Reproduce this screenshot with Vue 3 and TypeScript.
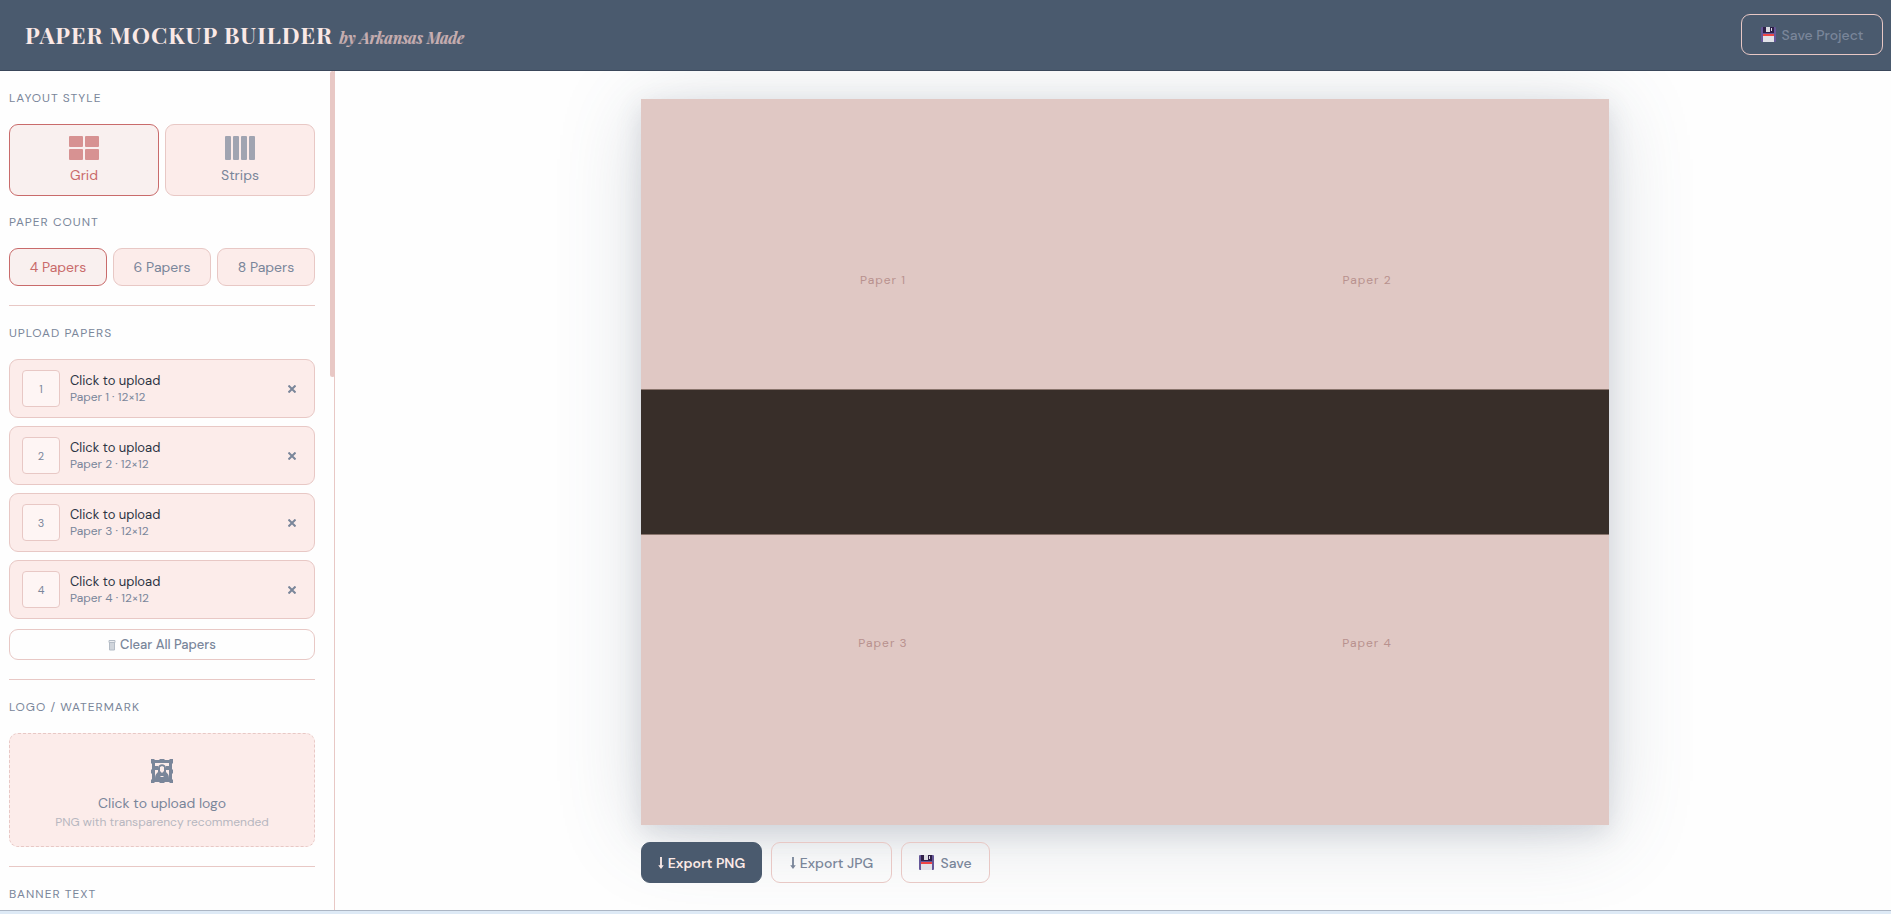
<script setup lang="ts">
import { ref } from 'vue'

const layout = ref<'grid' | 'strips'>('grid')
const count = ref(4)
const counts = [4, 6, 8]
const papers = [1, 2, 3, 4]
</script>

<template>
  <div class="app">
    <header class="topbar">
      <h1 class="brand">PAPER MOCKUP BUILDER <span class="byline">by Arkansas Made</span></h1>
      <button class="btn save-project" type="button">
        <svg class="disk" viewBox="0 0 15 15" aria-hidden="true">
          <rect width="15" height="15" rx="1" fill="#665899" />
          <rect x="2" width="11" height="6" fill="#2f1f48" />
          <rect x="5" width="4" height="5" fill="#dcdce2" />
          <rect x="10" y="1" width="1" height="3" fill="#dcdce2" />
          <rect x="2" y="7" width="11" height="2" fill="#ef4545" />
          <rect x="2" y="9" width="11" height="6" fill="#e2e2e8" />
        </svg>
        <span>Save Project</span>
      </button>
    </header>

    <div class="body">
      <aside class="sidebar">
        <div class="scroll">
          <section class="section">
            <h2 class="label">LAYOUT STYLE</h2>
            <div class="row">
              <button class="choice tall" :class="{ active: layout === 'grid' }" type="button" @click="layout = 'grid'">
                <span class="glyph quads"><i v-for="n in 4" :key="n"></i></span>
                Grid
              </button>
              <button class="choice tall" :class="{ active: layout === 'strips' }" type="button" @click="layout = 'strips'">
                <span class="glyph bars"><i v-for="n in 4" :key="n"></i></span>
                Strips
              </button>
            </div>
          </section>

          <section class="section">
            <h2 class="label">PAPER COUNT</h2>
            <div class="row">
              <button v-for="n in counts" :key="n" class="choice short" :class="{ active: count === n }" type="button" @click="count = n">{{ n }} Papers</button>
            </div>
          </section>

          <hr class="rule" />

          <section class="section">
            <h2 class="label">UPLOAD PAPERS</h2>
            <ul class="slots">
              <li v-for="n in papers" :key="n" class="slot">
                <button class="pick" type="button">
                  <span class="thumb">{{ n }}</span>
                  <span class="info">
                    <span class="name">Click to upload</span>
                    <span class="meta">Paper {{ n }} · 12×12</span>
                  </span>
                </button>
                <button class="remove" type="button" :aria-label="'Remove paper ' + n">
                  <svg viewBox="0 0 8 8" aria-hidden="true"><path d="M.5.5 7.500 7.500M7.500.5.5 7.500" /></svg>
                </button>
              </li>
            </ul>
            <button class="btn clear" type="button">
              <svg class="trash" viewBox="0 0 8 12" aria-hidden="true">
                <path d="M1 1.500h6v2H1zM1.500 3.500v7.500h5V3.500M3 4v7M5 4v7" />
              </svg>
              <span>Clear All Papers</span>
            </button>
          </section>

          <hr class="rule" />

          <section class="section">
            <h2 class="label">LOGO / WATERMARK</h2>
            <button class="drop" type="button">
              <svg class="picture" viewBox="0 0 22 24" aria-hidden="true">
                <path fill-rule="evenodd" d="M0 0h3l1 1h4l1-1h4l1 1h4l1-1h3v4l-1 1v5l1 1v3l-1 1v5l1 1v3h-3l-1-1h-4l-1 1H9l-1-1H4l-1 1H0v-3l1-1v-5l-1-1v-3l1-1V5L0 4zM4 4v16h14V4z" />
                <path d="M4 7h3v4H4zM15 7h3v4h-3z" />
                <path fill-rule="evenodd" d="M4 20c0-4 1-5 3-7V9c0-5 8-5 8 0v4c2 2 3 3 3 7zM9 8v4l2 2 2-2V8l-2-1zM9 18h4l-1-1h-2z" />
              </svg>
              <span class="drop-title">Click to upload logo</span>
              <span class="drop-hint">PNG with transparency recommended</span>
            </button>
          </section>

          <hr class="rule" />

          <section class="section">
            <h2 class="label">BANNER TEXT</h2>
          </section>
        </div>
        <div class="track"><div class="handle"></div></div>
      </aside>

      <main class="stage">
        <div class="preview">
          <div class="canvas">
            <div v-for="n in papers" :key="n" class="paper">Paper {{ n }}</div>
            <div class="banner"></div>
          </div>
          <div class="actions">
            <button class="btn primary" type="button">
              <svg class="arrow" viewBox="0 0 6 13" aria-hidden="true"><path d="M2 0h2v9h2l-3 4-3-4h2z" /></svg>
              <span>Export PNG</span>
            </button>
            <button class="btn" type="button">
              <svg class="arrow" viewBox="0 0 6 13" aria-hidden="true"><path d="M2 0h2v9h2l-3 4-3-4h2z" /></svg>
              <span>Export JPG</span>
            </button>
            <button class="btn save" type="button">
              <svg class="disk" viewBox="0 0 15 15" aria-hidden="true">
                <rect width="15" height="15" rx="1" fill="#665899" />
                <rect x="2" width="11" height="6" fill="#2f1f48" />
                <rect x="5" width="4" height="5" fill="#dcdce2" />
                <rect x="10" y="1" width="1" height="3" fill="#dcdce2" />
                <rect x="2" y="7" width="11" height="2" fill="#ef4545" />
                <rect x="2" y="9" width="11" height="6" fill="#e2e2e8" />
              </svg>
              <span>Save</span>
            </button>
          </div>
        </div>
      </main>
    </div>
    <footer class="edge"></footer>
  </div>
</template>

<style>
body {
  margin: 0;
}
</style>

<style scoped>
.app {
  display: flex;
  flex-direction: column;
  height: 100vh;
  overflow: hidden;
  background: #fefefe;
  color: #7a869a;
  font-family: "DM Sans", Inter, "Open Sans", sans-serif;
  font-size: 14px;
}
.app *,
.app {
  box-sizing: border-box;
}
button {
  font: inherit;
  color: inherit;
  cursor: pointer;
}
.topbar {
  display: flex;
  align-items: center;
  justify-content: space-between;
  flex: none;
  height: 71px;
  padding: 0 8px 1px 25px;
  background: #4a5a6e;
  border-bottom: 1px solid #3a475a;
}
.brand {
  margin: 0;
  padding-top: 4px;
  color: #fbe9e6;
  font-family: "Playfair Display", "Liberation Serif", serif;
  font-size: 23px;
  line-height: 32px;
  font-weight: 700;
  letter-spacing: 1px;
}
.byline {
  color: #c9b0b2;
  font-size: 16px;
  font-style: italic;
  font-weight: 400;
  letter-spacing: 0;
  text-shadow: 1px 0 0 currentColor;
}
.btn {
  display: flex;
  align-items: center;
  justify-content: center;
  gap: 4px;
  height: 41px;
  padding: 0;
  border: 1px solid #e8c8c5;
  border-radius: 9px;
  background: transparent;
  font-weight: 500;
  line-height: 20px;
  white-space: nowrap;
}
.disk {
  width: 15px;
  height: 15px;
  margin-right: 2px;
}
.save-project {
  width: 142px;
  color: #7a869a;
}
.body {
  display: flex;
  flex: 1;
  min-height: 0;
}
.sidebar {
  position: relative;
  flex: none;
  width: 335px;
  border-right: 1px solid #e8c8c5;
}
.scroll {
  height: 100%;
  padding: 19px 19px 0 9px;
  overflow: hidden;
}
.track {
  position: absolute;
  top: 0;
  right: -1px;
  bottom: 0;
  width: 5px;
}
.handle {
  height: 306px;
  border-radius: 3px;
  background: #e8c8c5;
}
.label {
  margin: 0 0 18px;
  font-size: 12px;
  line-height: 16px;
  font-weight: 400;
  letter-spacing: 1px;
}
.section + .section {
  margin-top: 18px;
}
.row {
  display: flex;
  gap: 6px;
}
.choice {
  display: flex;
  flex: 1;
  flex-direction: column;
  align-items: center;
  border: 1px solid #e8c8c5;
  border-radius: 9px;
  background: #fcecea;
  line-height: 20px;
}
.choice.active {
  border-color: #c96b6b;
  background: #f9f0ef;
  color: #c96b6b;
}
.tall {
  height: 72px;
  padding: 11px 0 0;
  gap: 5px;
}
.short {
  height: 38px;
  padding: 0;
  justify-content: center;
}
.glyph {
  display: grid;
  gap: 2px;
  width: 30px;
  height: 24px;
  opacity: 0.7;
}
.quads {
  grid-template-columns: 1fr 1fr;
}
.bars {
  grid-template-columns: repeat(4, 1fr);
}
.glyph i {
  border-radius: 1px;
  background: currentColor;
}
.rule {
  height: 1px;
  margin: 19px 0;
  border: 0;
  background: #e8c8c5;
}
.slots {
  display: flex;
  flex-direction: column;
  gap: 8px;
  margin: 0;
  padding: 0;
  list-style: none;
}
.slot {
  display: flex;
  align-items: center;
  height: 59px;
  padding: 0 12px;
  border: 1px solid #e8c8c5;
  border-radius: 9px;
  background: #fcecea;
}
.pick {
  display: flex;
  flex: 1;
  align-items: center;
  gap: 10px;
  padding: 0;
  border: 0;
  background: none;
  text-align: left;
}
.thumb {
  display: grid;
  place-items: center;
  width: 38px;
  height: 37px;
  border: 1px solid #e8c8c5;
  border-radius: 4px;
  background: #fef5f4;
  font-size: 11px;
}
.info {
  display: flex;
  flex-direction: column;
}
.name {
  color: #2c3444;
  font-size: 13px;
  line-height: 17px;
}
.meta {
  font-size: 12px;
  line-height: 16px;
}
.remove {
  display: grid;
  place-items: center;
  width: 20px;
  height: 20px;
  padding: 0;
  border: 0;
  background: none;
}
.remove svg {
  width: 8px;
  height: 8px;
  fill: none;
  stroke: currentColor;
  stroke-width: 2;
}
.clear {
  width: 100%;
  height: 31px;
  margin-top: 10px;
  font-size: 13px;
}
.trash {
  width: 8px;
  height: 12px;
  fill: #eceef1;
  stroke: #b4bcc6;
}
.drop {
  display: flex;
  flex-direction: column;
  align-items: center;
  width: 100%;
  height: 114px;
  padding: 25px 0 0;
  border: 1px dashed #e8c8c5;
  border-radius: 9px;
  background: #fcecea;
}
.picture {
  width: 22px;
  height: 24px;
  margin-bottom: 10px;
  fill: currentColor;
}
.drop-title {
  line-height: 20px;
}
.drop-hint {
  color: #b7b7c0;
  font-size: 12px;
  line-height: 18px;
}
.stage {
  display: flex;
  flex: 1;
  justify-content: center;
  min-width: 0;
  padding: 28px 0 27px 24px;
  overflow: hidden;
}
.preview {
  display: flex;
  flex-direction: column;
  gap: 17px;
  width: calc((100vh - 188px) * 4 / 3);
  max-width: 100%;
}
.canvas {
  display: grid;
  grid-template-columns: 1fr 1fr;
  grid-template-rows: 1fr 1fr;
  position: relative;
  aspect-ratio: 4 / 3;
  background: #e0c8c4;
  box-shadow: 0 8px 80px rgba(74, 90, 110, 0.2), 0 8px 24px rgba(74, 90, 110, 0.16);
}
.paper {
  display: grid;
  place-items: center;
  padding-bottom: 2px;
  color: #b8918e;
  font-size: 12px;
  line-height: 16px;
  letter-spacing: 1px;
}
.banner {
  position: absolute;
  top: 40%;
  right: 0;
  left: 0;
  height: 20%;
  border: solid #8a756d;
  border-width: 1px 0;
  background: #382e29;
}
.actions {
  display: flex;
  gap: 9px;
}
.actions .btn {
  position: relative;
  width: 121px;
}
.actions .save {
  width: 89px;
}
.actions .primary {
  border-color: #4a5a6e;
  background: #4a5a6e;
  color: #fbe9e6;
  font-weight: 600;
}
.arrow {
  width: 6px;
  height: 12px;
  fill: currentColor;
}
.edge {
  flex: none;
  height: 4px;
  border-top: 1px solid #acb6c4;
  background: #deeaf6;
}
</style>
